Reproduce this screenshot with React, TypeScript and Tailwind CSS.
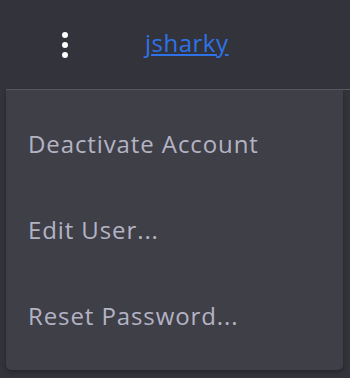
export default function App() {
  const items = ["Deactivate Account", "Edit User...", "Reset Password..."];
  return (
    <div className="w-[350px] h-[378px] bg-[#33333b] overflow-hidden" style={{ fontFamily: "'Open Sans', 'Noto Sans', sans-serif" }}>
      <div className="h-[89px] flex items-center">
        <div className="w-[130px] flex justify-center">
          <div className="flex flex-col gap-[4px] items-center">
            <span className="w-[6px] h-[6px] rounded-full bg-white" />
            <span className="w-[6px] h-[6px] rounded-full bg-white" />
            <span className="w-[6px] h-[6px] rounded-full bg-white" />
          </div>
        </div>
        <a href="#" className="ml-[15px] -mt-[4px] text-[24px] tracking-[0.5px] text-[#2f72e8] underline underline-offset-2">
          jsharky
        </a>
      </div>
      <div className="ml-[6px] border-t border-[#5a5a62]">
        <div className="w-[337px] h-[280px] py-[11px] bg-[#3f3f48] rounded-b-[5px] shadow-[0_2px_4px_rgba(0,0,0,0.3)]">
          {items.map((t) => (
            <div key={t} className="h-[86px] flex items-center pl-[22px] text-[24px] tracking-[0.9px] text-[#b4b3c4]">
              {t}
            </div>
          ))}
        </div>
      </div>
    </div>
  );
}
